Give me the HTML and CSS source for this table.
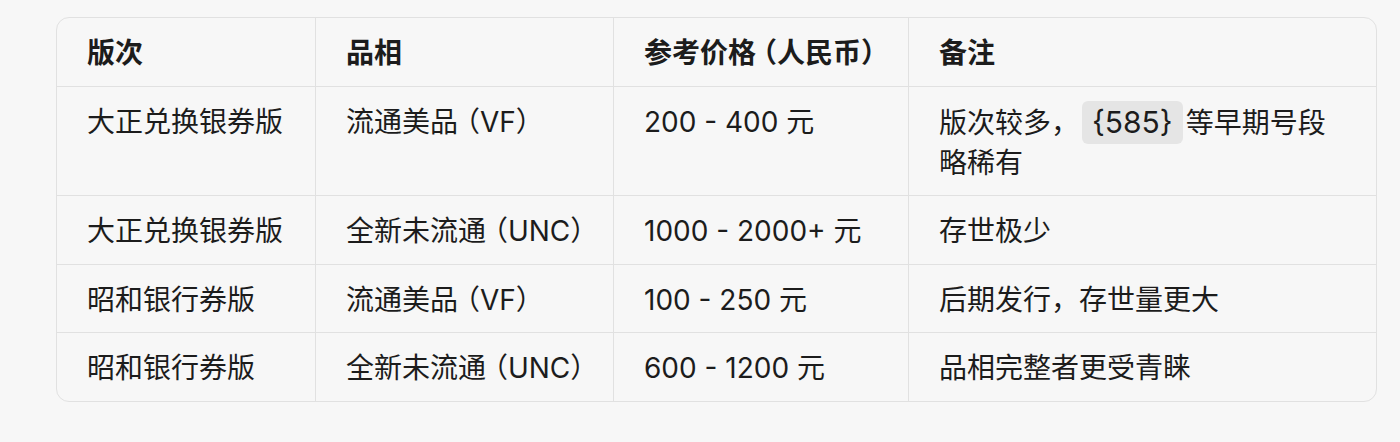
FILE: index.html
```html
<!DOCTYPE html>
<html lang="zh-CN">
<head>
<meta charset="utf-8">
<link rel="stylesheet" href="styles.css">
</head>
<body>
<div class="wrap">
<table class="grid">
<thead>
<tr><th class="c1">版次</th><th class="c2">品相</th><th class="c3">参考价格 （人民币）</th><th class="c4">备注</th></tr>
</thead>
<tbody>
<tr><td>大正兑换银券版</td><td>流通美品 （VF）</td><td>200 - 400 元</td><td>版次较多，<code>{585}</code>等早期号段略稀有</td></tr>
<tr><td>大正兑换银券版</td><td>全新未流通 （UNC）</td><td>1000 - 2000+ 元</td><td>存世极少</td></tr>
<tr><td>昭和银行券版</td><td>流通美品 （VF）</td><td>100 - 250 元</td><td>后期发行，存世量更大</td></tr>
<tr><td>昭和银行券版</td><td>全新未流通 （UNC）</td><td>600 - 1200 元</td><td>品相完整者更受青睐</td></tr>
</tbody>
</table>
</div>
</body>
</html>
```
FILE: styles.css
```css
html, body {
  margin: 0;
  background: #f7f7f7;
}
body {
  font-family: "Inter", "Noto Sans CJK SC", sans-serif;
  color: #1c1c1c;
  font-size: 28px;
  line-height: 40px;
}
.wrap {
  padding: 17px 23px 0 56px;
}
.grid {
  width: 1321px;
  border-collapse: separate;
  border-spacing: 0;
  border: 1px solid #e1e1e1;
  border-radius: 13px;
  table-layout: fixed;
}
.grid th, .grid td {
  text-align: left;
  vertical-align: top;
  padding: 15px 30px 12.5px 30px;
  border-right: 1px solid #e1e1e1;
  border-bottom: 1px solid #e1e1e1;
  font-feature-settings: "halt";
  white-space: nowrap;
}
.grid td:last-child {
  font-feature-settings: normal;
  white-space: normal;
}
.grid th:last-child, .grid td:last-child { border-right: none; }
.grid tbody tr:last-child td { border-bottom: none; }
.grid th { font-weight: 600; }
.c1 { width: 259px; }
.c2 { width: 298px; }
.c3 { width: 295px; }
.grid .c1, .grid .c2, .grid .c3 { box-sizing: border-box; }
code {
  font-family: "Inter", "Noto Sans CJK SC", sans-serif;
  font-size: 30px;
  background: #e5e5e5;
  border-radius: 6px;
  padding: 3px 10px 4px;
  margin: 0 3px 0 3px;
}
```
